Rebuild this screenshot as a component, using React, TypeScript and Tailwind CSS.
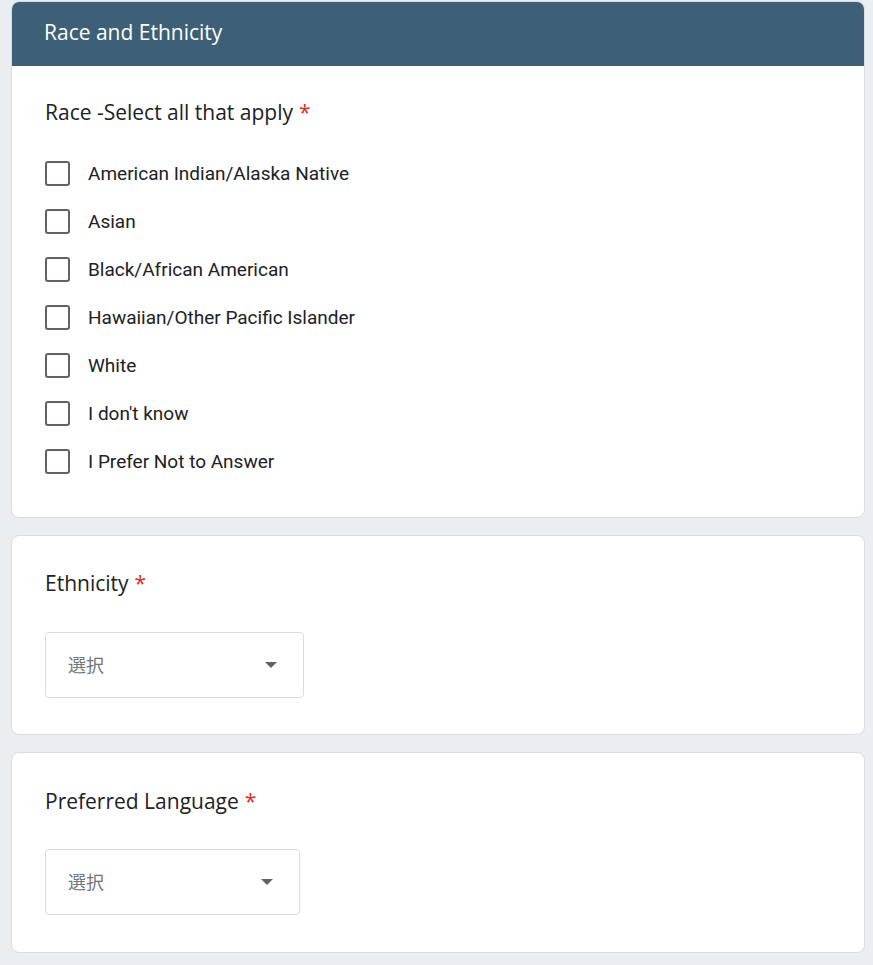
import React from 'react';

const races = [
  'American Indian/Alaska Native',
  'Asian',
  'Black/African American',
  'Hawaiian/Other Pacific Islander',
  'White',
  "I don't know",
  'I Prefer Not to Answer',
];

const headFont = { fontFamily: '"Open Sans", "Noto Sans", sans-serif' };

const Label = ({ text }: { text: string }) => (
  <div className="h-[24px] flex items-center text-[21px] text-[#202124]" style={headFont}>
    <span>{text}</span>
    <span className="ml-[6px] text-[#d93025]">*</span>
  </div>
);

const Select = ({ width, top }: { width: string; top: string }) => (
  <div
    className={`${width} ${top} h-[66px] border border-[#dadce0] rounded-[4px] flex items-center justify-between pl-[22px] pr-[26px]`}
  >
    <span
      className="text-[18px] leading-[24px] pb-[2px] text-[#70757a]"
      style={{ fontFamily: '"Noto Sans CJK JP", "Noto Sans", sans-serif' }}
    >
      選択
    </span>
    <svg width="12" height="6" viewBox="0 0 12 6">
      <path d="M0 0 L12 0 L6 6 Z" fill="#5f6368" />
    </svg>
  </div>
);

export default function App() {
  return (
    <div
      className="min-h-[965px] bg-[#ebeef1] pl-[11px] pr-[8px] pt-[1px] flex flex-col gap-[17px]"
      style={{ fontFamily: 'Roboto, "Liberation Sans", sans-serif' }}
    >
      <div className="bg-white rounded-[8px] border border-[#dadce0] overflow-hidden">
        <div className="h-[64px] bg-[#3d6077] flex items-center pb-[2px] px-[32px] text-white text-[21px]" style={headFont}>
          Race and Ethnicity
        </div>
        <div className="pt-[35px] pb-[32px] px-[33px]">
          <Label text="Race -Select all that apply" />
          <div className="mt-[24px] flex flex-col">
            {races.map((r) => (
              <div key={r} className="h-[48px] flex items-center">
                <div className="w-[25px] h-[25px] border-2 border-[#5f6368] rounded-[3px] shrink-0" />
                <span className="ml-[18px] pt-[2px] text-[19px] leading-[24px] text-[#202124]">{r}</span>
              </div>
            ))}
          </div>
        </div>
      </div>

      <div className="bg-white rounded-[8px] border border-[#dadce0] pt-[36px] pb-[36px] px-[33px]">
        <Label text="Ethnicity" />
        <Select width="w-[259px]" top="mt-[36px]" />
      </div>

      <div className="bg-white rounded-[8px] border border-[#dadce0] pt-[37px] pb-[37px] px-[33px]">
        <Label text="Preferred Language" />
        <Select width="w-[255px]" top="mt-[35px]" />
      </div>
    </div>
  );
}
